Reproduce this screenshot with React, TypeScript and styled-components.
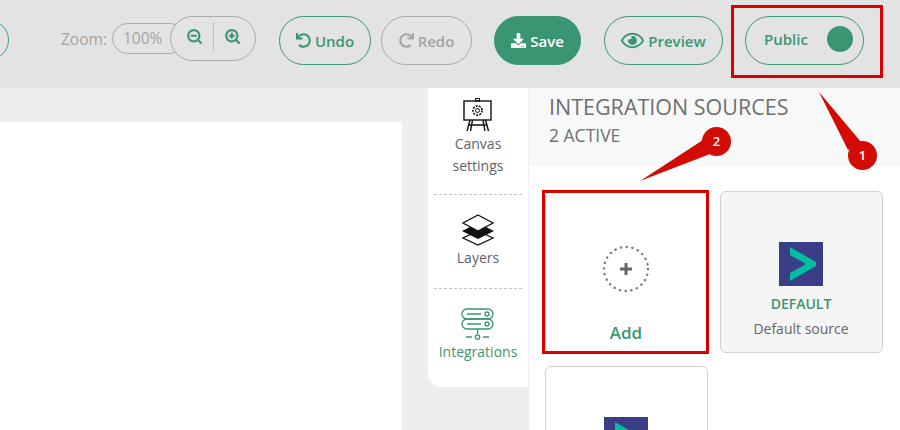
import styled, { createGlobalStyle } from "styled-components"
import { FaUndo, FaRedo, FaDownload, FaRegEye } from "react-icons/fa"
import { ZoomIn, ZoomOut } from "lucide-react"

const green = "#3a9672"

const GlobalStyle = createGlobalStyle`
	html, body {
		margin: 0;
		padding: 0;
		width: 900px;
		height: 430px;
		overflow: hidden;
		font-family: "Open Sans", "Noto Sans", sans-serif;
	}
`

const Page = styled.div`
	position: relative;
	width: 900px;
	height: 430px;
	overflow: hidden;
	display: flex;
	flex-direction: column;
	background-color: #eeeeee;
`

const Toolbar = styled.div`
	flex: 0 0 88px;
	display: flex;
	align-items: flex-start;
	background-color: #e3e3e3;
`

const CutOffButton = styled.div`
	flex: none;
	width: 40px;
	height: 40px;
	margin: 20px 0 0 -31px;
	box-sizing: border-box;
	border: 1px solid #35a0a8;
	border-radius: 50%;
`

const ZoomLabel = styled.span`
	margin: 29px 0 0 52px;
	width: 51px;
	font-size: 15.5px;
	line-height: 20px;
	color: #a5a5a5;
`

const ZoomValue = styled.div`
	flex: none;
	box-sizing: border-box;
	width: 74px;
	height: 31px;
	margin-top: 23px;
	padding-left: 10px;
	border: 1px solid #a9a9a9;
	border-radius: 16px;
	font-size: 15.5px;
	line-height: 29px;
	color: #a5a5a5;
`

const ZoomButtons = styled.div`
	flex: none;
	display: flex;
	align-items: center;
	justify-content: center;
	box-sizing: border-box;
	width: 86px;
	height: 45px;
	margin: 16px 0 0 -16px;
	padding-bottom: 4px;
	border: 1px solid #a9a9a9;
	border-radius: 23px;
	background-color: #e3e3e3;
	color: ${green};
`

const ZoomDivider = styled.div`
	height: 28px;
	margin: 0 10px;
	border-left: 1px dotted #a0a0a0;
`

const ActionButton = styled.div<{ $width: number; $gap: number; $variant?: "solid" | "muted" }>`
	flex: none;
	display: flex;
	align-items: center;
	justify-content: center;
	gap: 4px;
	box-sizing: border-box;
	width: ${(p) => p.$width}px;
	height: 49px;
	margin: 16px 0 0 ${(p) => p.$gap}px;
	border: 1px solid ${(p) => (p.$variant === "muted" ? "#a9a9a9" : green)};
	border-radius: 25px;
	background-color: ${(p) => (p.$variant === "solid" ? green : "transparent")};
	color: ${(p) => (p.$variant === "solid" ? "#ffffff" : p.$variant === "muted" ? "#a5a5a5" : green)};
	font-size: 15px;
	font-weight: 600;
`

const PublicToggle = styled(ActionButton)`
	justify-content: space-between;
	padding: 0 10px 0 18px;
`

const PublicLabel = styled.span`
	margin-bottom: 4px;
`

const ToggleDot = styled.div`
	width: 26px;
	height: 26px;
	margin-bottom: 3px;
	border-radius: 50%;
	background-color: ${green};
`

const Workspace = styled.div`
	flex: 1;
	display: flex;
	min-height: 0;
`

const CanvasArea = styled.div`
	flex: 0 0 428px;
	padding: 34px 26px 0 0;
	box-sizing: border-box;
`

const Canvas = styled.div`
	height: 100%;
	background-color: #ffffff;
`

const Rail = styled.div`
	flex: 0 0 100px;
	height: 299px;
	box-sizing: border-box;
	padding: 10px 6px 0;
	background-color: #ffffff;
	border-bottom-left-radius: 14px;
`

const RailItem = styled.div<{ $active?: boolean; $height: number }>`
	display: flex;
	flex-direction: column;
	align-items: center;
	gap: 1px;
	box-sizing: border-box;
	height: ${(p) => p.$height}px;
	font-size: 14px;
	line-height: 22px;
	text-align: center;
	color: ${(p) => (p.$active ? green : "#5f6368")};

	& + & {
		border-top: 1px dashed #c4c4c4;
		padding-top: 19px;
	}
`

const Panel = styled.div`
	flex: 1;
	margin-left: 1px;
	background-color: #ffffff;
`

const PanelHeader = styled.div`
	height: 78px;
	box-sizing: border-box;
	padding: 4px 20px 0;
	background-color: #f7f9f9;
	color: #6f6f6f;
`

const PanelTitle = styled.div`
	font-size: 21.5px;
	line-height: 29px;
`

const PanelSubtitle = styled.div`
	font-size: 17.5px;
	line-height: 28px;
`

const CardGrid = styled.div`
	display: grid;
	grid-template-columns: 163px 163px;
	grid-auto-rows: 162px;
	gap: 13px 12px;
	padding: 25px 0 0 16px;
`

const Card = styled.div<{ $tinted?: boolean }>`
	display: flex;
	flex-direction: column;
	align-items: center;
	box-sizing: border-box;
	border: 1px solid #cfcfcf;
	border-radius: 6px;
	background-color: ${(p) => (p.$tinted ? "#f5f5f5" : "#ffffff")};
	padding: 50px 1px 0 0;
`

const AddIcon = styled.svg`
	display: block;
	margin-top: 3px;
`

const AddLabel = styled.div`
	margin-top: 29px;
	font-size: 17px;
	font-weight: 600;
	line-height: 22px;
	color: ${green};
`

const SourceName = styled.div`
	margin-top: 8px;
	font-size: 14px;
	font-weight: 600;
	line-height: 20px;
	color: ${green};
`

const SourceDescription = styled.div`
	margin-top: 5px;
	font-size: 14px;
	line-height: 20px;
	color: #666666;
`

const Highlight = styled.div<{ $x: number; $y: number; $w: number; $h: number }>`
	position: absolute;
	left: ${(p) => p.$x}px;
	top: ${(p) => p.$y}px;
	width: ${(p) => p.$w}px;
	height: ${(p) => p.$h}px;
	box-sizing: border-box;
	border: 3px solid #d90000;
`

const ArrowLayer = styled.svg`
	position: absolute;
	left: 0;
	top: 0;
`

const Pin = styled.div<{ $x: number; $y: number }>`
	position: absolute;
	left: ${(p) => p.$x}px;
	top: ${(p) => p.$y}px;
	width: 29px;
	height: 29px;
	border-radius: 50%;
	background-color: #d30b05;
	color: #ffffff;
	font-size: 13px;
	font-weight: 600;
	line-height: 29px;
	text-align: center;
`

function SourceLogo() {
	return (
		<svg width="44" height="44" viewBox="0 0 44 44">
			<rect width="44" height="44" fill="#393e87" />
			<polygon points="11,5 37,20 37,24 11,39 11,31 27,22 11,13" fill="#00bfa0" />
		</svg>
	)
}

function CanvasIcon() {
	return (
		<svg width="30" height="34" viewBox="0 0 30 34" fill="none" stroke="#111" strokeWidth="1">
			<rect x="1" y="3" width="27" height="19" fill="#fff" strokeWidth="1.4" />
			<rect x="12.5" y="0.5" width="4" height="2.5" />
			<circle cx="14.5" cy="12.5" r="2" />
			<circle cx="14.5" cy="12.5" r="4.6" strokeDasharray="2 1.2" strokeWidth="1.6" />
			<path d="M7 22 L4 33 M9.5 22 L7.5 33 M20 22 L22 33 M22.5 22 L25.5 33 M6 27 H24" strokeWidth="1.4" />
		</svg>
	)
}

function LayersIcon() {
	return (
		<svg width="34" height="32" viewBox="0 0 34 32">
			<path d="M17 17 L32 24 L17 31 L2 24 Z" fill="#fff" stroke="#111" strokeWidth="1.3" />
			<path d="M17 9 L33 17 L17 25 L1 17 Z" fill="#111" />
			<path d="M17 1 L32 9 L17 17 L2 9 Z" fill="#fff" stroke="#111" strokeWidth="1.3" />
		</svg>
	)
}

function IntegrationsIcon() {
	return (
		<svg width="34" height="32" viewBox="0 0 34 32" fill="none" stroke={green} strokeWidth="1.3">
			<rect x="1" y="1" width="31" height="10" rx="5" />
			<rect x="1" y="11" width="31" height="10" rx="5" />
			<circle cx="26" cy="6" r="2" />
			<circle cx="26" cy="16" r="2" />
			<path d="M6 6 H20 M6 16 H20 M16.5 21 V26 M5 29 H11 M22 29 H28" />
			<circle cx="16.5" cy="29" r="2.2" />
		</svg>
	)
}

export default function App() {
	return (
		<Page>
			<GlobalStyle />
			<Toolbar>
				<CutOffButton />
				<ZoomLabel>Zoom:</ZoomLabel>
				<ZoomValue>100%</ZoomValue>
				<ZoomButtons>
					<ZoomOut size={17} strokeWidth={3} />
					<ZoomDivider />
					<ZoomIn size={17} strokeWidth={3} />
				</ZoomButtons>
				<ActionButton $width={92} $gap={23}><FaUndo size={15} />Undo</ActionButton>
				<ActionButton $width={91} $gap={10} $variant="muted"><FaRedo size={15} />Redo</ActionButton>
				<ActionButton $width={87} $gap={22} $variant="solid"><FaDownload size={15} />Save</ActionButton>
				<ActionButton $width={119} $gap={23}><FaRegEye size={23} />Preview</ActionButton>
				<PublicToggle $width={119} $gap={22}>
					<PublicLabel>Public</PublicLabel>
					<ToggleDot />
				</PublicToggle>
			</Toolbar>
			<Workspace>
				<CanvasArea>
					<Canvas />
				</CanvasArea>
				<Rail>
					<RailItem $height={96}>
						<CanvasIcon />
						<span>Canvas<br />settings</span>
					</RailItem>
					<RailItem $height={94}>
						<LayersIcon />
						<span>Layers</span>
					</RailItem>
					<RailItem $height={90} $active>
						<IntegrationsIcon />
						<span>Integrations</span>
					</RailItem>
				</Rail>
				<Panel>
					<PanelHeader>
						<PanelTitle>INTEGRATION SOURCES</PanelTitle>
						<PanelSubtitle>2 ACTIVE</PanelSubtitle>
					</PanelHeader>
					<CardGrid>
						<Card>
							<AddIcon width="48" height="48" viewBox="0 0 48 48">
								<circle cx="24" cy="24" r="22" fill="none" stroke="#777" strokeWidth="2.4" strokeLinecap="round" strokeDasharray="0.1 5.66" />
								<path d="M24 18 V30 M18 24 H30" stroke="#666" strokeWidth="3" />
							</AddIcon>
							<AddLabel>Add</AddLabel>
						</Card>
						<Card $tinted>
							<SourceLogo />
							<SourceName>DEFAULT</SourceName>
							<SourceDescription>Default source</SourceDescription>
						</Card>
						<Card>
							<SourceLogo />
						</Card>
					</CardGrid>
				</Panel>
			</Workspace>

			<Highlight $x={731} $y={5} $w={152} $h={73} />
			<Highlight $x={542} $y={190} $w={167} $h={164} />
			<ArrowLayer width="900" height="430" viewBox="0 0 900 430">
				<polygon points="819,92 861,142 848,150" fill="#d30b05" />
				<polygon points="640,181 703,140 710,154" fill="#d30b05" />
			</ArrowLayer>
			<Pin $x={848} $y={141}>1</Pin>
			<Pin $x={702} $y={127}>2</Pin>
		</Page>
	)
}
